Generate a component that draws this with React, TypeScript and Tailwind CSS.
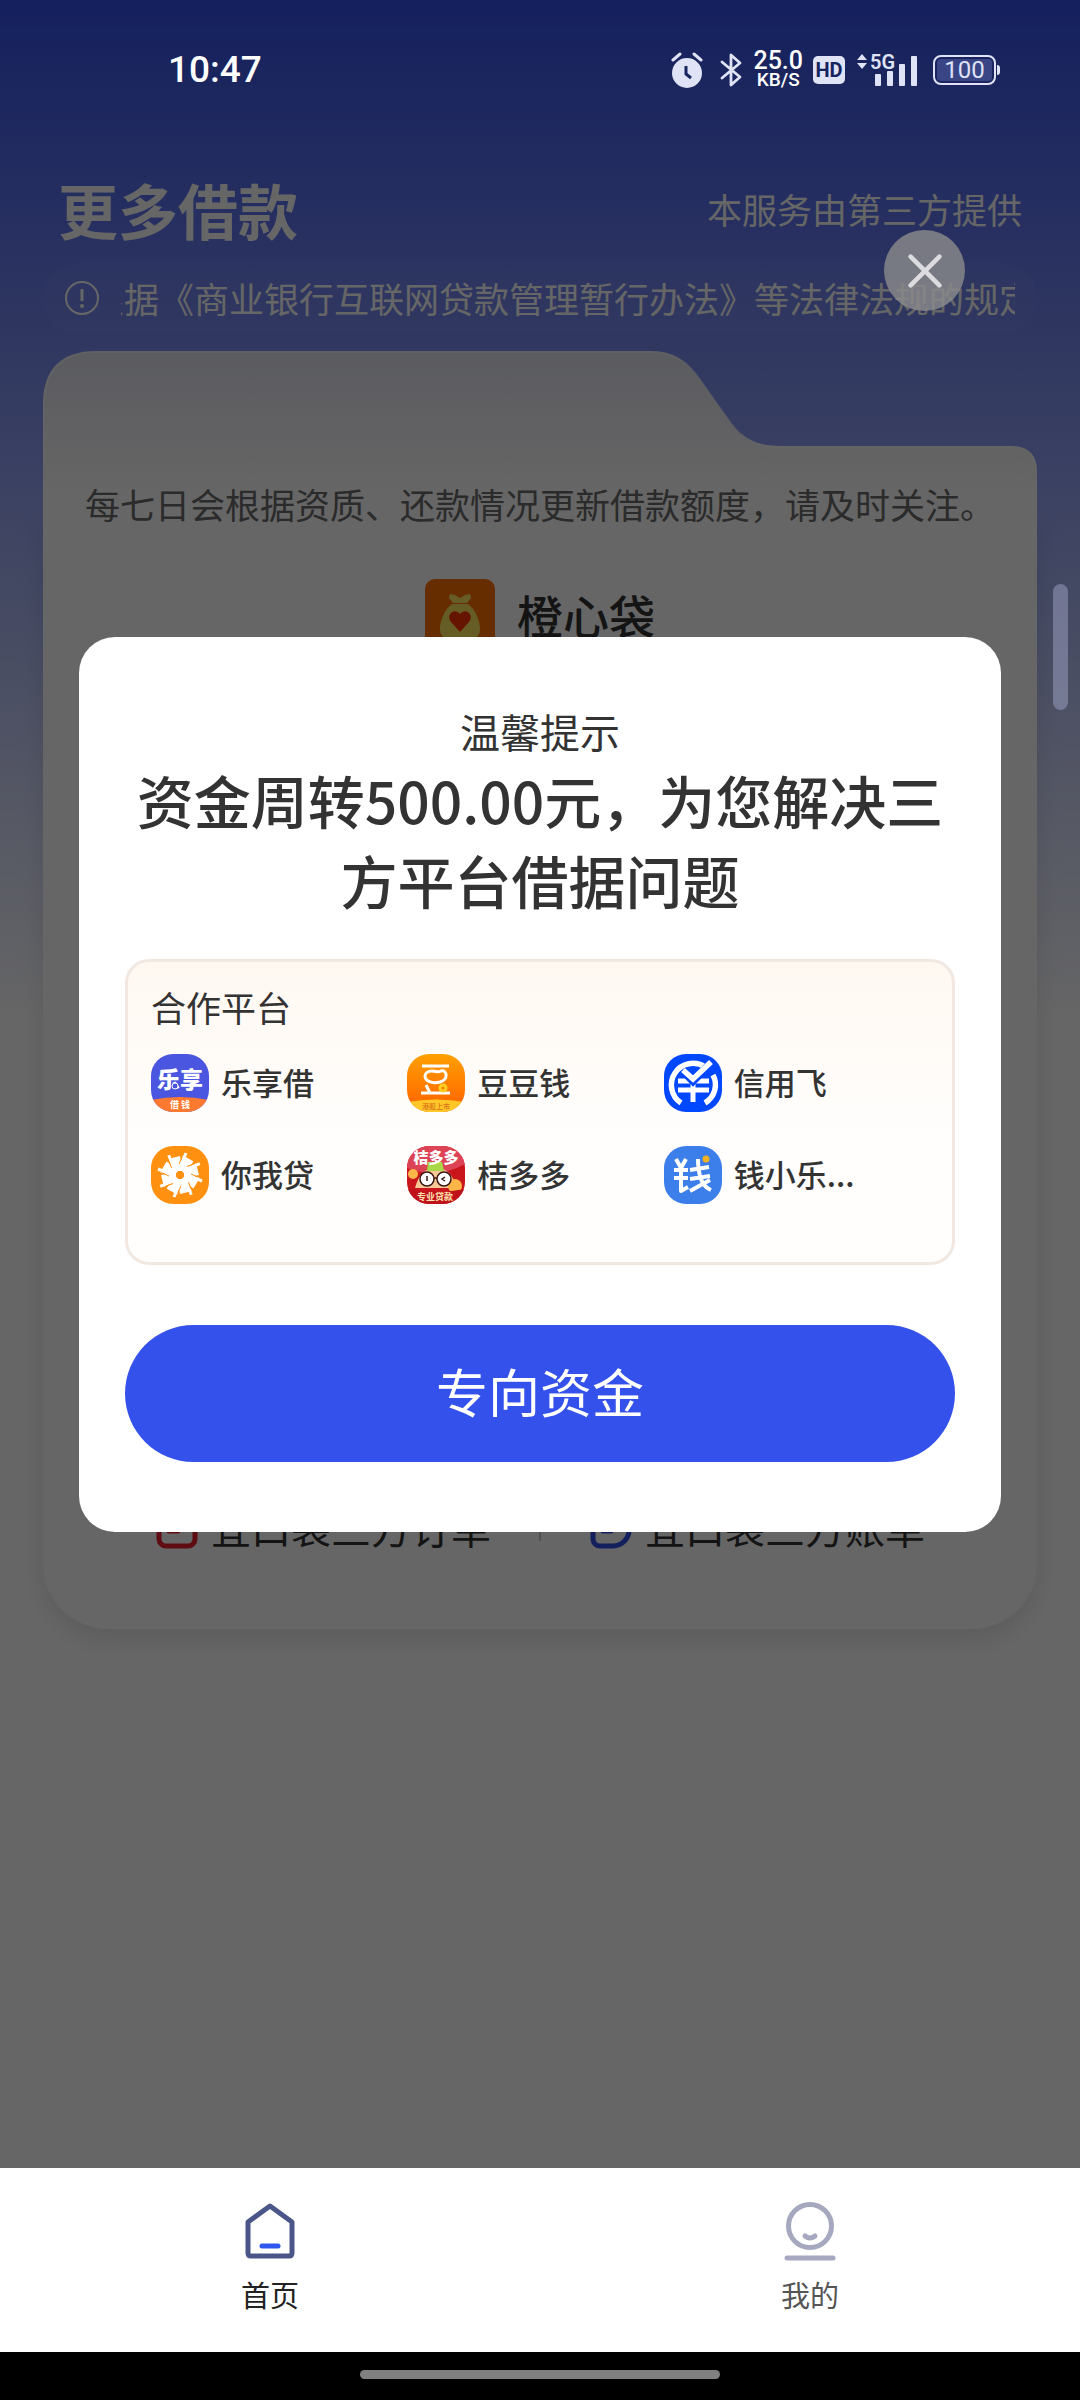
import type { ReactNode } from "react";

const StatusBar = () => {
  return (
    <header className="relative z-20 flex h-[140px] items-center justify-between pl-[168px] pr-20 font-[Roboto,sans-serif] text-[#dfe3f5]">
      <time className="text-[37px] font-medium text-white">10:47</time>
      <div className="flex items-center">
        <svg className="h-9 w-8" viewBox="0 0 32 36" fill="none">
          <circle cx="16" cy="21" r="15" fill="#dfe3f5" />
          <path d="M2 8l7-6M30 8l-7-6" stroke="#dfe3f5" strokeWidth="3" strokeLinecap="round" />
          <path d="M15 14v8l5 4" stroke="#16245f" strokeWidth="3" />
        </svg>
        <svg className="ml-4 h-9 w-6" viewBox="0 0 24 36" fill="none" stroke="#dfe3f5" strokeWidth="2.8">
          <path d="M3 10l18 15-9 8V3l9 8L3 26" strokeLinejoin="round" strokeLinecap="round" />
        </svg>
        <div className="ml-[10px] flex flex-col items-center font-medium text-white">
          <span className="text-[25px] leading-5">25.0</span>
          <span className="text-[19px] leading-[18px]">KB/S</span>
        </div>
        <span className="ml-[10px] flex h-7 w-8 items-center justify-center rounded-[5px] bg-[#dfe3f5] text-xl font-bold text-[#16245f]">
          HD
        </span>
        <svg className="ml-3 h-9 w-[62px] overflow-visible" viewBox="0 0 62 36" fill="#dfe3f5">
          <path d="M5 2l5 6H0zM5 17l5-6H0z" />
          <text x="13" y="17" fontSize="20" fontWeight="600">
            5G
          </text>
          <rect x="18" y="22" width="6" height="12" rx="1" />
          <rect x="30" y="19" width="6" height="15" rx="1" />
          <rect x="42" y="12" width="6" height="22" rx="1" />
          <rect x="54" y="4" width="6" height="30" rx="1" />
        </svg>
        <span className="ml-[14px] flex h-[30px] w-[63px] items-center justify-center rounded-lg border-2 border-[#dfe3f5] bg-[#3a4585] bg-clip-content p-[2px] text-2xl">
          100
        </span>
        <span className="ml-px h-[10px] w-[3px] rounded-r bg-[#dfe3f5]" />
      </div>
    </header>
  );
};

const CardShape = () => {
  return (
    <div className="absolute inset-0 flex flex-col">
      <svg
        className="relative z-10 h-[160px] w-full shrink-0"
        viewBox="0 0 994 160"
        preserveAspectRatio="none"
        fill="none"
      >
        <defs>
          <linearGradient id="cardTop" x1="0" y1="0" x2="0" y2="1">
            <stop offset="0" stopColor="#e3e4f0" />
            <stop offset="0.9" stopColor="#ffffff" />
          </linearGradient>
        </defs>
        <path
          d="M0 160V54Q0 0 54 0H607C632 0 645 12 655 26L689 74C700 88 714 95 736 95H968Q994 95 994 121V160Z"
          fill="url(#cardTop)"
        />
        <path
          d="M1 160V54Q1 1 54 1H607C632 1 645 12 655 26L689 74C700 88 714 96 736 96H968Q993 96 993 121V160"
          stroke="#ffffff"
          strokeOpacity="0.5"
          strokeWidth="2"
        />
      </svg>
      <div className="flex-1 rounded-b-[65px] bg-white shadow-[0_10px_24px_rgba(0,0,0,0.1)]" />
    </div>
  );
};

const OrderLinks = () => {
  return (
    <div className="mt-auto flex items-center justify-center pb-[72px] text-[40px] leading-[60px] text-[#333]">
      <a href="#orders" className="flex items-center gap-3">
        <svg className="size-11" viewBox="0 0 44 44" fill="none" stroke="#f02030" strokeWidth="5">
          <rect x="4" y="5" width="36" height="36" rx="7" />
          <path d="M14 16h16M14 26h9" strokeLinecap="round" />
        </svg>
        宜口袋三方订单
      </a>
      <span className="mx-12 h-7 w-[2px] bg-[#ccc]" />
      <a href="#bills" className="flex items-center gap-3">
        <svg className="size-11" viewBox="0 0 44 44" fill="none" stroke="#3451eb" strokeWidth="5">
          <path d="M11 5h22a7 7 0 0 1 7 7v13a16 16 0 0 1-16 16H11a7 7 0 0 1-7-7V12a7 7 0 0 1 7-7z" />
          <path d="M14 16h16M14 26h8" strokeLinecap="round" />
        </svg>
        宜口袋三方账单
      </a>
    </div>
  );
};

const LoanPage = () => {
  return (
    <main>
      <div className="mb-[22px] mt-[38px] flex h-[62px] items-center justify-between px-[58px] text-white">
        <h1 className="text-[60px] font-bold">更多借款</h1>
        <p className="text-[35px]">本服务由第三方提供</p>
      </div>
      <div className="mx-[43px] flex h-[72px] items-center rounded-full bg-white/3 pl-5 pr-[22px] text-white">
        <svg className="size-[38px] shrink-0" viewBox="0 0 38 38" fill="none" stroke="#fff" strokeWidth="2">
          <circle cx="19" cy="19" r="16" />
          <path d="M19 10v12" strokeWidth="3" />
          <circle cx="19" cy="27" r="1" />
        </svg>
        <div className="ml-5 flex-1 overflow-hidden">
          <p className="-ml-8 whitespace-nowrap text-[35px]">
            根据《商业银行互联网贷款管理暂行办法》等法律法规的规定
          </p>
        </div>
      </div>
      <section className="relative mx-[43px] mt-[17px] min-h-[1278px]">
        <CardShape />
        <div className="relative z-10 flex min-h-[1278px] flex-col items-center pt-32">
          <p className="text-[35px] leading-[50px] text-[#6b6b6b]">
            每七日会根据资质、还款情况更新借款额度，请及时关注。
          </p>
          <div className="mt-[50px] flex h-[70px] items-center gap-[22px]">
            <svg className="size-[70px]" viewBox="0 0 70 70">
              <rect width="70" height="70" rx="10" fill="#ff7000" />
              <path
                d="M25 15l5 1 5 3 5-3 5-1 1 4-4 5H28l-4-5zM27 25h16c7 5 12 16 12 25 0 6-3 9-8 9H23c-5 0-8-3-8-9 0-9 5-20 12-25z"
                fill="#ffe860"
              />
              <path d="M35 53L26 43c-6-8 4-15 9-8 5-7 15 0 9 8z" fill="#ff3800" />
            </svg>
            <h2 className="text-[46px] font-medium text-[#333]">橙心袋</h2>
          </div>
          <OrderLinks />
        </div>
      </section>
    </main>
  );
};

const Logo = ({ children }: { children: ReactNode }) => {
  return (
    <svg className="size-[58px] shrink-0 rounded-[22px]" viewBox="0 0 58 58" fill="none">
      {children}
    </svg>
  );
};

const platforms = [
  {
    name: "乐享借",
    logo: (
      <Logo>
        <rect width="58" height="58" fill="#4a55e0" />
        <text x="29" y="34" fontSize="23" fontWeight="900" textAnchor="middle" fill="#fff">
          乐享
        </text>
        <circle cx="24" cy="32" r="3" fill="#4a55e0" stroke="#fff" />
        <path d="M0 46Q29 40 58 46V58H0z" fill="#ff7a30" />
        <text x="29" y="54" fontSize="9" fontWeight="700" textAnchor="middle" fill="#fff">
          借 钱
        </text>
      </Logo>
    ),
  },
  {
    name: "豆豆钱",
    logo: (
      <Logo>
        <defs>
          <linearGradient id="bean" x1="0" y1="0" x2="0" y2="1">
            <stop stopColor="#ffa000" />
            <stop offset="1" stopColor="#ff6000" />
          </linearGradient>
        </defs>
        <rect width="58" height="58" fill="url(#bean)" />
        <g stroke="#fff" strokeWidth="3">
          <path d="M15 12h27M14 39h29M19 31l4 8" />
          <path d="M25 17c5 0 5 2 9 0 6-2 8 9-1 11-8 2-15-1-15-6 0-3 3-5 7-5z" />
        </g>
        <circle cx="36" cy="34" r="3" stroke="#ffd01e" strokeWidth="3" />
        <path d="M0 48Q29 43 58 48V58H0z" fill="#ffc828" />
        <text x="29" y="55" fontSize="7" textAnchor="middle" fill="#d9701a">
          港股上市
        </text>
      </Logo>
    ),
  },
  {
    name: "信用飞",
    logo: (
      <Logo>
        <rect width="58" height="58" fill="#0048ff" />
        <path d="M17 49A21 21 0 1 1 41 13M49 21A21 21 0 0 1 41 49" stroke="#fff" strokeWidth="5.5" />
        <path d="M14 27h31M14 36h31M29 28v20" stroke="#fff" strokeWidth="5" />
        <path d="M19 17l10 10 18-18" stroke="#0048ff" strokeWidth="8" />
        <path d="M19 16l10 9 18-17" stroke="#fff" strokeWidth="5.5" />
      </Logo>
    ),
  },
  {
    name: "你我贷",
    logo: (
      <Logo>
        <rect width="58" height="58" fill="#ff9010" />
        {[0, 45, 90, 135, 180, 225, 270, 315].map((angle) => (
          <g key={angle} transform={`rotate(${angle} 29 29)`}>
            <path d="M26 25L17 13l12-3 3 15z" fill="#fff" />
            <path d="M29 21l6-14" stroke="#fff" strokeWidth="3" />
            <path d="M28 18l4-9" stroke="#ff9010" strokeWidth="1" />
          </g>
        ))}
      </Logo>
    ),
  },
  {
    name: "桔多多",
    logo: (
      <Logo>
        <rect width="58" height="58" fill="#c9161d" />
        <path d="M0 0h58v18Q29 34 0 22z" fill="#dc4355" />
        <path d="M8 42Q13 22 29 22T49 42z" fill="#f7c795" />
        <path d="M21 16h14l2 9H20z" fill="#a8d848" />
        <circle cx="6" cy="28" r="5" fill="#ffb547" />
        <circle cx="48" cy="40" r="7" fill="#ffb547" />
        <g fill="#fff" stroke="#3a1512" strokeWidth="1.5">
          <circle cx="20" cy="33" r="7" />
          <circle cx="37" cy="33" r="7" />
          <path d="M27 32h3M20 30v5M38 31l-3 2 3 2" />
        </g>
        <text x="29" y="17" fontSize="15" fontWeight="900" textAnchor="middle" fill="#fff">
          桔多多
        </text>
        <path d="M0 43Q29 49 58 43V58H0z" fill="#c0121a" />
        <text x="28" y="54" fontSize="9" fontWeight="700" textAnchor="middle" fill="#ffe3b0">
          专业贷款
        </text>
      </Logo>
    ),
  },
  {
    name: "钱小乐...",
    logo: (
      <Logo>
        <rect width="58" height="58" fill="#3c7eea" />
        <g stroke="#fff" strokeWidth="4" strokeLinejoin="round">
          <path d="M12 13l5 9 5-9M10 24h14M10 32h14M17 22v23l7-4" />
          <path d="M26 24l19-3M26 33l20-3M34 13c0 16 3 27 13 31M46 34L26 45" />
        </g>
        <circle cx="42" cy="13" r="3.5" fill="#f5b020" />
      </Logo>
    ),
  },
];

const FundsDialog = () => {
  return (
    <div className="absolute inset-0 z-10 flex flex-col justify-center bg-black/60 px-[79px]">
      <button
        aria-label="关闭"
        className="absolute right-[115px] top-[230px] flex size-[81px] items-center justify-center rounded-full bg-[#8c8c8c]/80"
      >
        <svg className="size-9" viewBox="0 0 40 40" stroke="#dcdce0" strokeWidth="5" strokeLinecap="round">
          <path d="M4 4l32 32M36 4L4 36" />
        </svg>
      </button>
      <div
        role="dialog"
        className="rounded-[36px] bg-white px-[46px] pb-[70px] pt-[66px] text-center text-[#333]"
      >
        <p className="text-[40px] leading-[56px]">温馨提示</p>
        <h2 className="text-[57px] font-medium leading-[80px]">
          资金周转500.00元，为您解决三方平台借据问题
        </h2>
        <div className="mt-10 rounded-3xl border-3 border-[#f1e8e2] bg-linear-to-b from-[#fff8f1] to-[#fffefd] to-60% pb-[58px] pl-[23px] pr-8 pt-5 text-left">
          <h3 className="text-[35px] leading-[50px]">合作平台</h3>
          <ul className="mt-[22px] grid grid-cols-3 gap-y-[34px]">
            {platforms.map((platform) => (
              <li key={platform.name} className="flex h-[58px] items-center gap-3 whitespace-nowrap text-[31px] font-medium">
                {platform.logo}
                {platform.name}
              </li>
            ))}
          </ul>
        </div>
        <button className="mt-[60px] h-[137px] w-full rounded-full bg-[#3451eb] pb-1 text-[52px] text-white">
          专向资金
        </button>
      </div>
    </div>
  );
};

const TabBar = () => {
  return (
    <nav className="grid h-[184px] grid-cols-2 bg-white text-[29px] leading-10">
      <a href="#home" className="flex flex-col items-center pt-8 text-[#222]">
        <svg className="size-[62px]" viewBox="0 0 62 62" fill="none" strokeLinejoin="round" strokeLinecap="round">
          <path d="M31 6L53 22V53Q53 56 50 56H12Q9 56 9 53V22Z" stroke="#4a5688" strokeWidth="5" />
          <path d="M23 46h16" stroke="#2f56ee" strokeWidth="5" />
        </svg>
        <span className="mt-3">首页</span>
      </a>
      <a href="#mine" className="flex flex-col items-center pt-8 text-[#555]">
        <svg className="size-[62px]" viewBox="0 0 62 62" fill="none" stroke="#a6a8bf" strokeWidth="5" strokeLinecap="round">
          <circle cx="31" cy="26" r="21.5" />
          <path d="M26 36q5 4 10 0M8 58h46" />
        </svg>
        <span className="mt-3">我的</span>
      </a>
    </nav>
  );
};

export default function App() {
  return (
    <div className="flex min-h-screen flex-col bg-white font-['Noto_Sans_CJK_SC',sans-serif]">
      <div className="relative flex-1 bg-linear-to-b/srgb from-[#3451eb] to-white to-[1020px]">
        <StatusBar />
        <LoanPage />
        <FundsDialog />
        <div className="absolute right-3 top-[584px] z-20 h-[126px] w-[15px] rounded-full bg-[#a9acd0]/45" />
      </div>
      <TabBar />
      <footer className="flex h-12 items-center justify-center bg-black pb-[3px]">
        <span className="h-[9px] w-1/3 rounded-full bg-[#808080]" />
      </footer>
    </div>
  );
}
